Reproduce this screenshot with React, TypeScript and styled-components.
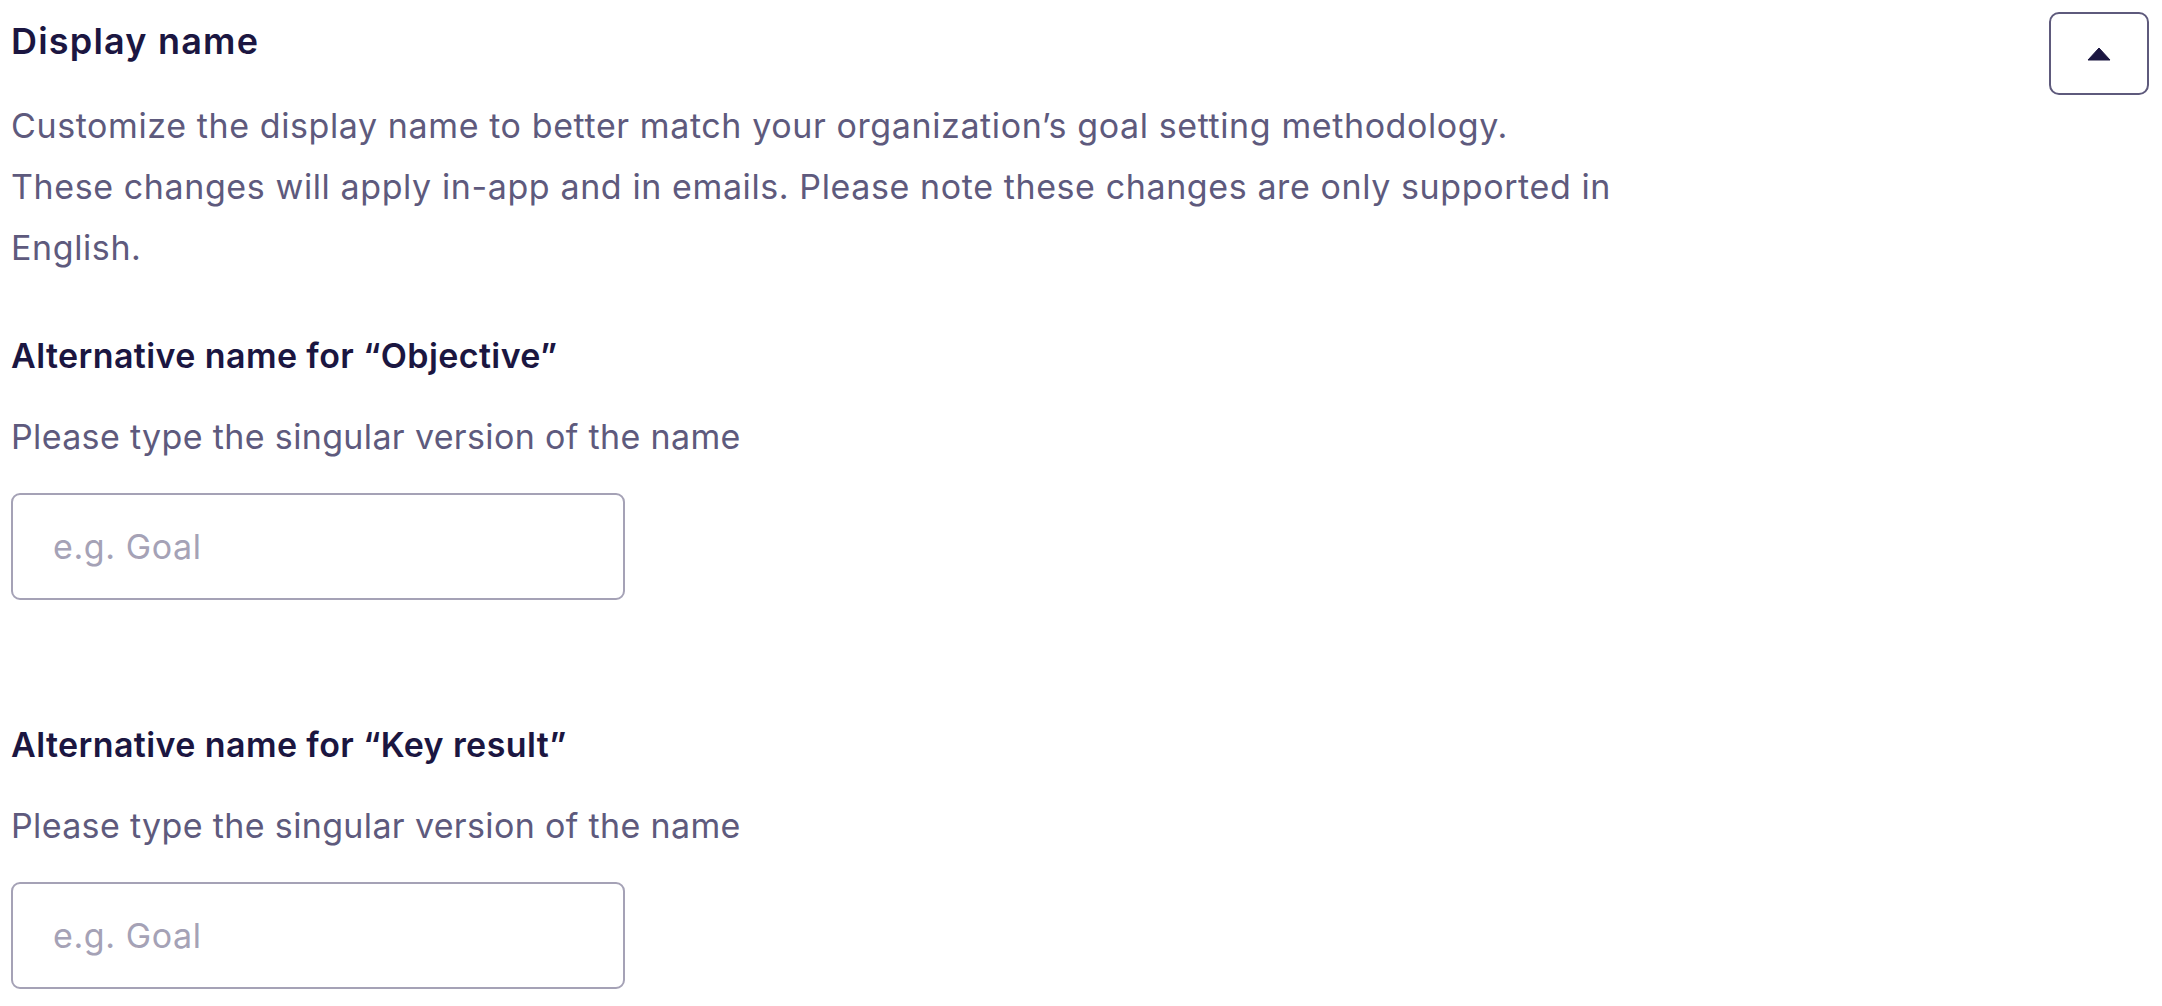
import { FC } from 'react';
import styled, { createGlobalStyle } from 'styled-components';

const GlobalStyle = createGlobalStyle`
  html, body {
    margin: 0;
    padding: 0;
    background: #ffffff;
  }
  body {
    font-family: Inter, 'Noto Sans', 'Liberation Sans', sans-serif;
    -webkit-font-smoothing: antialiased;
  }
`;

const fields = [
  { id: 'objective', label: 'Alternative name for “Objective”' },
  { id: 'key-result', label: 'Alternative name for “Key result”' },
];

const Root = styled.div`
  display: flex;
  flex-direction: column;
  padding: 12px 13px 0 11px;
`;

const Header = styled.div`
  display: flex;
  justify-content: space-between;
  align-items: flex-start;
`;

const Intro = styled.div`
  display: flex;
  flex-direction: column;
  padding-top: 7px;
`;

const Title = styled.h2`
  margin: 0;
  font-size: 36px;
  line-height: 44px;
  font-weight: 600;
  color: #1b1641;
  letter-spacing: 1.2px;
`;

const Description = styled.p`
  margin: 32px 0 0 0;
  max-width: 1660px;
  font-size: 34px;
  line-height: 61px;
  font-weight: 400;
  color: #5e5a7d;
  letter-spacing: 0.6px;
`;

const ToggleButton = styled.button`
  display: flex;
  align-items: center;
  justify-content: center;
  flex-shrink: 0;
  width: 100px;
  height: 83px;
  padding: 0;
  background: #ffffff;
  border: 2px solid #5e5a7c;
  border-radius: 10px;
  cursor: pointer;
`;

const Fields = styled.div`
  display: flex;
  flex-direction: column;
  gap: 123px;
  margin-top: 56px;
`;

const Field = styled.div`
  display: flex;
  flex-direction: column;
`;

const Label = styled.label`
  font-size: 34px;
  line-height: 44px;
  font-weight: 600;
  color: #1b1641;
  letter-spacing: 0.4px;
`;

const Hint = styled.div`
  margin-top: 37px;
  font-size: 34px;
  line-height: 44px;
  color: #5e5a7d;
  letter-spacing: 0.35px;
`;

const Input = styled.input`
  box-sizing: border-box;
  margin-top: 34px;
  width: 614px;
  height: 107px;
  padding: 0 40px;
  border: 2px solid #a5a2b6;
  border-radius: 9px;
  font-family: inherit;
  font-size: 34px;
  letter-spacing: 0.6px;
  color: #1b1641;
  background: #ffffff;
  outline: none;

  &::placeholder {
    color: #a5a2b6;
  }
`;

const CaretUp: FC = () => (
  <svg width="24" height="14" viewBox="0 0 24 14" aria-hidden="true">
    <path d="M12 1 L23 13 L1 13 Z" fill="#1b1641" stroke="#1b1641" strokeWidth="1" strokeLinejoin="round" />
  </svg>
);

const App: FC = () => (
  <>
    <GlobalStyle />
    <Root>
      <Header>
        <Intro>
          <Title>Display name</Title>
          <Description>
            Customize the display name to better match your organization’s goal setting methodology.
            <br />
            These changes will apply in-app and in emails. Please note these changes are only supported in English.
          </Description>
        </Intro>
        <ToggleButton aria-label="Collapse">
          <CaretUp />
        </ToggleButton>
      </Header>
      <Fields>
        {fields.map((field) => (
          <Field key={field.id}>
            <Label htmlFor={field.id}>{field.label}</Label>
            <Hint>Please type the singular version of the name</Hint>
            <Input id={field.id} placeholder="e.g. Goal" />
          </Field>
        ))}
      </Fields>
    </Root>
  </>
);

export default App;
